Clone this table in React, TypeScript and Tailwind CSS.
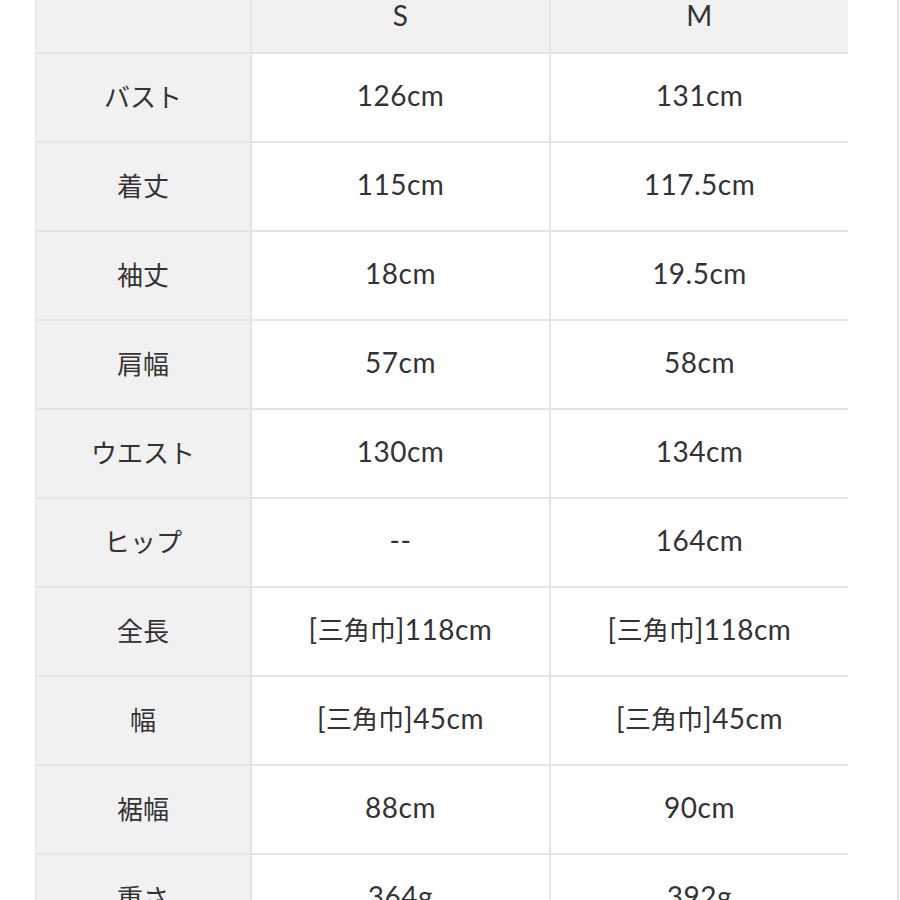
const rows: [string, string, string][] = [
  ["バスト", "126cm", "131cm"],
  ["着丈", "115cm", "117.5cm"],
  ["袖丈", "18cm", "19.5cm"],
  ["肩幅", "57cm", "58cm"],
  ["ウエスト", "130cm", "134cm"],
  ["ヒップ", "--", "164cm"],
  ["全長", "[三角巾]118cm", "[三角巾]118cm"],
  ["幅", "[三角巾]45cm", "[三角巾]45cm"],
  ["裾幅", "88cm", "90cm"],
  ["重さ", "364g", "392g"],
];

const latin = { fontFamily: '"Lato", "Liberation Sans", sans-serif' };
const cjk = { fontFamily: '"Noto Sans CJK JP", "Noto Sans", sans-serif' };

// kanji in the values sit a little smaller than the latin digits
function Value({ text }: { text: string }) {
  const parts = text.split(/([\u3000-\u9fff]+)/).filter(Boolean);
  return (
    <span className="whitespace-nowrap text-[28px] leading-none tracking-[0.5px]" style={latin}>
      {parts.map((p, i) =>
        /[\u3000-\u9fff]/.test(p) ? (
          <span key={i} className="text-[26px] tracking-normal" style={cjk}>
            {p}
          </span>
        ) : (
          <span key={i}>{p}</span>
        )
      )}
    </span>
  );
}

export default function App() {
  return (
    <div className="flex h-[900px] w-[900px] overflow-hidden bg-white text-[#333333]">
      <div className="w-[35px] shrink-0" />
      <div className="grid w-[813px] shrink-0 grid-cols-[214px_297px_297px] content-start gap-[2px] self-start bg-[#e5e5e5] pl-[1px]">
        <div className="h-[52px] bg-[#f1f1f1]" />
        <div className="flex h-[52px] items-center justify-center bg-[#f1f1f1] pb-[22px]">
          <Value text="S" />
        </div>
        <div className="flex h-[52px] items-center justify-center bg-[#f1f1f1] pb-[22px]">
          <Value text="M" />
        </div>
        {rows.map(([label, s, m]) => (
          <div key={label} className="contents">
            <div
              className="flex h-[87px] items-center justify-center bg-[#f1f1f1] pb-[4px] text-[26px] leading-none"
              style={cjk}
            >
              {label}
            </div>
            <div className="flex h-[87px] items-center justify-center bg-white pb-[6px]">
              <Value text={s} />
            </div>
            <div className="flex h-[87px] items-center justify-center bg-white pb-[6px]">
              <Value text={m} />
            </div>
          </div>
        ))}
      </div>
      <div className="flex-1" />
      <div className="mr-[1px] w-[2px] shrink-0 bg-[#e2e2e2]" />
    </div>
  );
}
